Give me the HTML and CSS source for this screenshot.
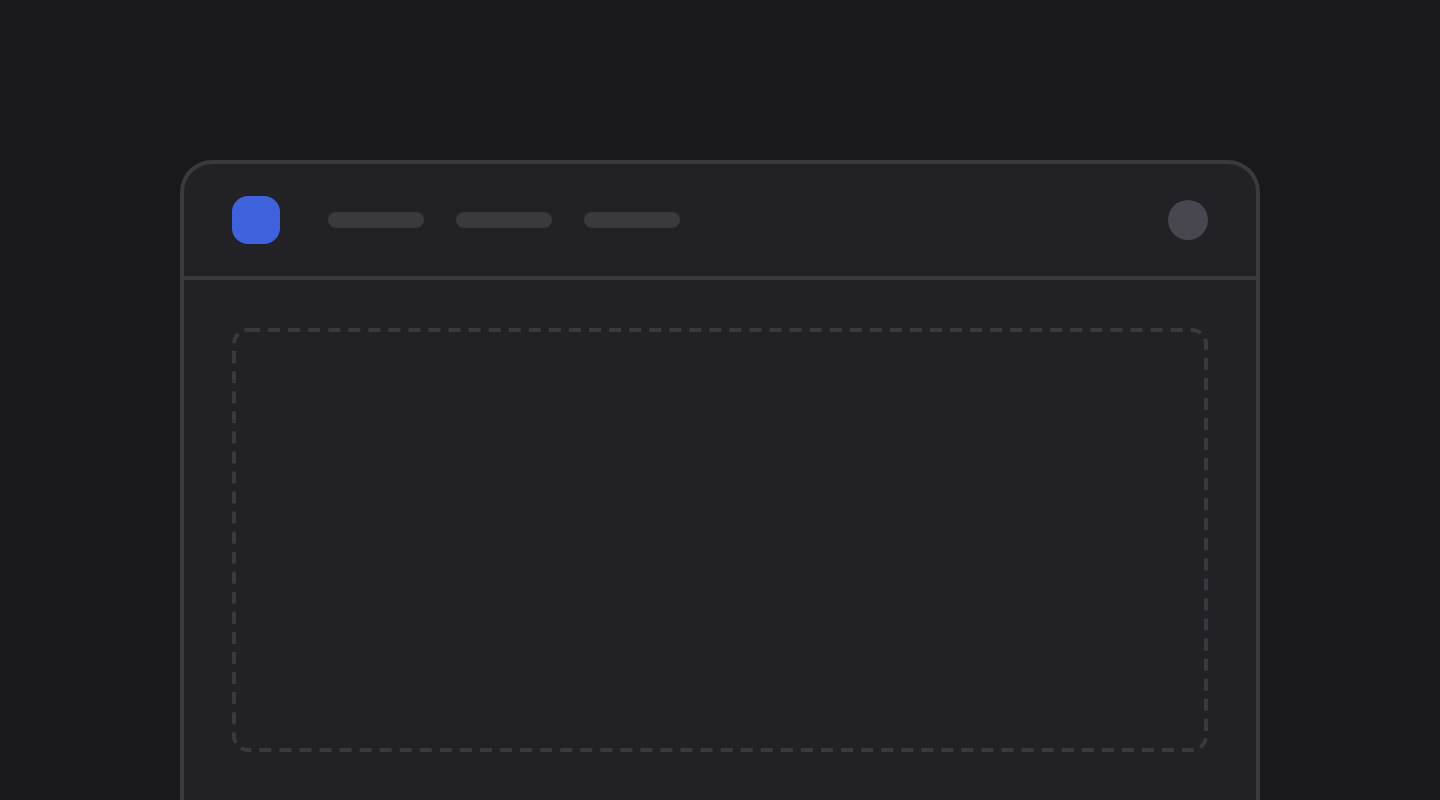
FILE: index.html
```html
<!DOCTYPE html>
<html lang="en">

<head>
  <meta charset="UTF-8" />
  <meta name="viewport" content="width=device-width, initial-scale=1.0" />
  <title>Layout Preview</title>
  <link rel="stylesheet" href="styles.css">
</head>

<body>
  <div class="window">

    <header class="header">
      <div class="logo"></div>
      <nav class="nav">
        <span class="nav-item"></span>
        <span class="nav-item"></span>
        <span class="nav-item"></span>
      </nav>
      <div class="avatar"></div>
    </header>

    <main class="content">
      <svg class="placeholder" aria-hidden="true">
        <rect class="placeholder-outline" rx="16" pathLength="2764" />
      </svg>
    </main>

  </div>
</body>

</html>
```

FILE: styles.css
```css
* {
  box-sizing: border-box;
}

body {
  font-family: Inter, sans-serif;
  background-color: #19181c;
  display: flex;
  justify-content: center;
  min-height: 100vh;
  margin: 0;
  padding-top: 160px;
}

.window {
  display: flex;
  flex-direction: column;
  width: 75%;
  background-color: #222126;
  border: 4px solid #39393e;
  border-bottom: 0;
  border-radius: 32px 32px 0 0;
}

.header {
  display: flex;
  align-items: center;
  padding: 32px 48px;
  border-bottom: 4px solid #39393e;
}

.logo {
  width: 48px;
  height: 48px;
  border-radius: 16px;
  background-color: #3e63dd;
}

.nav {
  display: flex;
  gap: 32px;
  margin-left: 48px;
}

.nav-item {
  width: 96px;
  height: 16px;
  border-radius: 8px;
  background-color: #39393e;
}

.avatar {
  width: 40px;
  height: 40px;
  margin-left: auto;
  border-radius: 50%;
  background-color: #484750;
}

.content {
  display: flex;
  flex: 1;
  padding: 48px;
}

/* the outline runs along the outer edge, so only its inner half shows */
.placeholder {
  flex: 1;
  width: 100%;
  overflow: hidden;
  border-radius: 16px;
}

.placeholder-outline {
  width: 100%;
  height: 100%;
  fill: none;
  stroke: #39393e;
  stroke-width: 8px;
  stroke-dasharray: 12 8;
}
```
